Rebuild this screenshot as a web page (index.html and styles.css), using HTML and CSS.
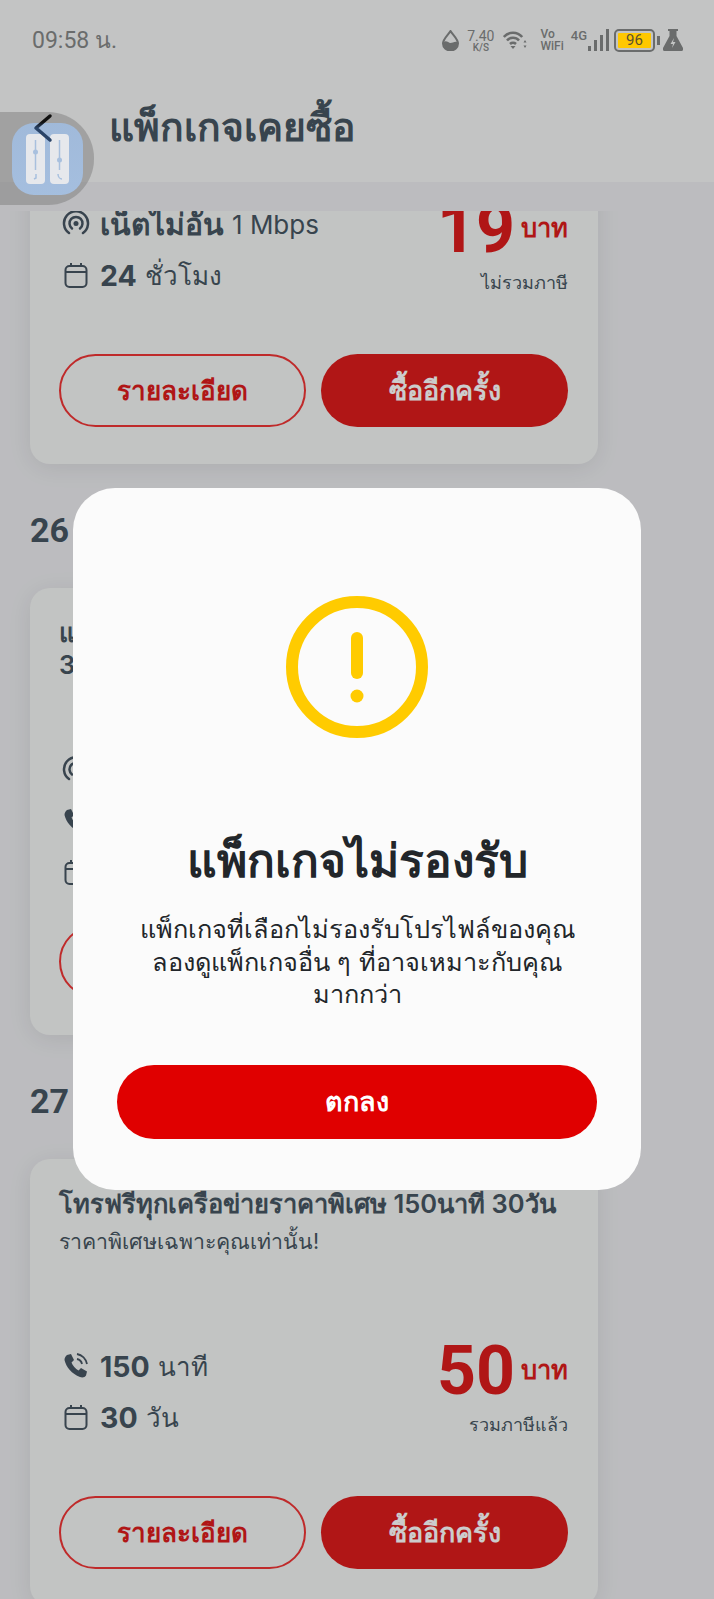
FILE: index.html
```html
<!DOCTYPE html>
<html>
<head>
    <title>แพ็กเกจเคยซื้อ</title>
    <meta charset="utf-8">
    <link rel="stylesheet" href="styles.css">
</head>
<body>
    <div class="status-bar">
        <span class="time">09:58 น.</span>
        <div class="status-icons">
            <svg class="ic-drop" width="17" height="21" viewBox="0 0 17 21"><path d="M8.5 1C6 5 1 9 1 13.5a7.5 7 0 0 0 15 0C16 9 11 5 8.5 1z" fill="none" stroke="#6a6c6c" stroke-width="2"/><path d="M1.5 12c3-2 5 1 7 1s4-2 7-1v2a7 6.500 0 0 1-14 0z" fill="#6a6c6c"/></svg>
            <div class="speed"><span>7.40</span><small>K/S</small></div>
            <svg class="ic-wifi" width="24" height="18" viewBox="0 0 24 18"><path d="M0.800 6a12 12 0 0 1 18.400 0M4 9.500a8 8 0 0 1 12 0M7 13a4.500 4.500 0 0 1 6 0" fill="none" stroke="#6a6c6c" stroke-width="2.600"/><path d="M7.500 15h5L10 18z" fill="#6a6c6c"/><path d="M22 9l1.500 2.500h-3zM22 17l1.500-2.500h-3z" fill="#6a6c6c"/></svg>
            <div class="vowifi"><span>Vo</span><span>WiFi</span></div>
            <span class="net">4G</span>
            <div class="signal"><i class="b1"></i><i class="b2"></i><i class="b3"></i><i class="b4"></i></div>
            <div class="battery"><div class="battery-fill">96</div></div>
            <div class="battery-tip"></div>
            <svg class="ic-flask" width="20" height="22" viewBox="0 0 20 22"><path d="M5 0h10v2h-1.500v5L20 19a2 2 0 0 1-2 3H2a2 2 0 0 1-2-3L6.500 7V2H5z" fill="#6a6c6c"/><path d="M11 9l-3.500 6h2.500l-1 4 3.500-6h-2.500z" fill="#c3c5c4"/></svg>
        </div>
    </div>

    <div class="header">
        <svg class="back" width="20" height="30" viewBox="0 0 20 30">
            <defs>
                <linearGradient id="back-grad" gradientUnits="userSpaceOnUse" x1="0" y1="3" x2="0" y2="27">
                    <stop offset="0.25" stop-color="#111"/>
                    <stop offset="0.5" stop-color="#2a4468"/>
                </linearGradient>
            </defs>
            <path d="M17 3L3 15l14 12" fill="none" stroke="url(#back-grad)" stroke-width="3.500" stroke-linecap="round" stroke-linejoin="round"/>
        </svg>
        <h1>แพ็กเกจเคยซื้อ</h1>
    </div>

    <div class="strip"></div>

    <div class="list-view">
        <div class="list">
            <div class="card">
                <div class="card-top"></div>
                <div class="card-mid">
                    <div class="rows">
                        <div class="row">
                            <svg class="row-ic" width="28" height="28" viewBox="0 0 28 28"><use href="#ic-net"/></svg>
                            <b class="row-big">เน็ตไม่อั้น</b> <span class="row-small">1 Mbps</span>
                        </div>
                        <div class="row">
                            <svg class="row-ic" width="28" height="28" viewBox="0 0 28 28"><use href="#ic-cal"/></svg>
                            <b>24</b> <span class="row-unit">ชั่วโมง</span>
                        </div>
                    </div>
                    <div class="price">
                        <div class="price-line"><span class="price-num">19</span><span class="price-unit">บาท</span></div>
                        <div class="price-note">ไม่รวมภาษี</div>
                    </div>
                </div>
                <div class="buttons">
                    <button class="btn-outline">รายละเอียด</button>
                    <button class="btn-solid">ซื้ออีกครั้ง</button>
                </div>
            </div>

            <h2>26</h2>
            <div class="card">
                <div class="card-top">
                    <div class="card-title">แ<br>3</div>
                </div>
                <div class="card-mid">
                    <div class="rows">
                        <div class="row"><svg class="row-ic" width="28" height="28" viewBox="0 0 28 28"><use href="#ic-net"/></svg></div>
                        <div class="row"><svg class="row-ic" width="28" height="28" viewBox="0 0 28 28"><use href="#ic-call"/></svg></div>
                        <div class="row"><svg class="row-ic" width="28" height="28" viewBox="0 0 28 28"><use href="#ic-cal"/></svg></div>
                    </div>
                </div>
                <div class="buttons">
                    <button class="btn-outline"></button>
                    <button class="btn-solid"></button>
                </div>
            </div>

            <h2>27</h2>
            <div class="card">
                <div class="card-top">
                    <div class="card-title">โทรฟรีทุกเครือข่ายราคาพิเศษ 150นาที 30วัน</div>
                    <div class="card-sub">ราคาพิเศษเฉพาะคุณเท่านั้น!</div>
                </div>
                <div class="card-mid">
                    <div class="rows">
                        <div class="row">
                            <svg class="row-ic" width="28" height="28" viewBox="0 0 28 28"><use href="#ic-call"/></svg>
                            <b>150</b> <span class="row-unit">นาที</span>
                        </div>
                        <div class="row">
                            <svg class="row-ic" width="28" height="28" viewBox="0 0 28 28"><use href="#ic-cal"/></svg>
                            <b>30</b> <span class="row-unit">วัน</span>
                        </div>
                    </div>
                    <div class="price">
                        <div class="price-line"><span class="price-num">50</span><span class="price-unit">บาท</span></div>
                        <div class="price-note">รวมภาษีแล้ว</div>
                    </div>
                </div>
                <div class="buttons">
                    <button class="btn-outline">รายละเอียด</button>
                    <button class="btn-solid">ซื้ออีกครั้ง</button>
                </div>
            </div>
        </div>
    </div>

    <div class="overlay">
        <div class="modal">
            <svg class="warn" width="142" height="142" viewBox="0 0 142 142">
                <circle cx="71" cy="71" r="65" fill="none" stroke="#ffcb00" stroke-width="12"/>
                <line x1="71" y1="42" x2="71" y2="77" stroke="#ffcb00" stroke-width="12" stroke-linecap="round"/>
                <circle cx="71" cy="100" r="6.500" fill="#ffcb00"/>
            </svg>
            <div class="modal-title">แพ็กเกจไม่รองรับ</div>
            <div class="modal-text">แพ็กเกจที่เลือกไม่รองรับโปรไฟล์ของคุณ<br>ลองดูแพ็กเกจอื่น ๆ ที่อาจเหมาะกับคุณ<br>มากกว่า</div>
            <button class="modal-btn">ตกลง</button>
        </div>
    </div>

    <div class="bubble">
        <div class="app-icon">
            <div class="app-panel">
                <svg width="19" height="50" viewBox="0 0 19 50"><path d="M9.500 6v30" stroke="#a8c0de" stroke-width="1.500"/><circle cx="9.500" cy="18" r="2.500" fill="#a8c0de"/><path d="M10 40v4l-2 1" fill="none" stroke="#a8c0de" stroke-width="1.500"/></svg>
            </div>
            <div class="app-panel">
                <svg width="19" height="50" viewBox="0 0 19 50"><path d="M9.500 6v30" stroke="#a8c0de" stroke-width="1.500"/><circle cx="9.500" cy="26" r="2.500" fill="#a8c0de"/><path d="M8 40c0 3 2 5 4 5" fill="none" stroke="#a8c0de" stroke-width="1.500"/></svg>
            </div>
        </div>
    </div>

    <svg class="defs" width="0" height="0">
        <symbol id="ic-net" viewBox="0 0 28 28">
            <path d="M7 23a12 12 0 1 1 14 0" fill="none" stroke="currentColor" stroke-width="2.500" stroke-linecap="round"/>
            <path d="M10 18.500a6.500 6.500 0 1 1 8 0" fill="none" stroke="currentColor" stroke-width="2.500" stroke-linecap="round"/>
            <circle cx="14" cy="13.500" r="2.500" fill="currentColor"/>
        </symbol>
        <symbol id="ic-call" viewBox="0 0 28 28">
            <path d="M5 3l4-1 3 6-2.500 2.500c1 3 4 6.500 7 8L19 16l6 3.500-1 4c-1 2-4 2.500-6 1.500C10 22 4 15 2.500 8 2.500 6 3.500 4 5 3z" fill="currentColor"/>
            <path d="M15 2c5 1 9 5 10 10M15 7c2.500.500 4.500 2.500 5 5" fill="none" stroke="currentColor" stroke-width="1.800"/>
        </symbol>
        <symbol id="ic-cal" viewBox="0 0 28 28">
            <rect x="3.500" y="5" width="21" height="21" rx="4" fill="none" stroke="currentColor" stroke-width="2"/>
            <path d="M3.500 11h21M9 2v4M19 2v4" fill="none" stroke="currentColor" stroke-width="2"/>
        </symbol>
    </svg>
</body>
</html>
```

FILE: styles.css
```css
html, body {
    margin: 0;
    padding: 0;
}
body {
    position: relative;
    width: 714px;
    height: 1599px;
    overflow: hidden;
    font-family: Inter, Roboto, "Noto Sans", sans-serif;
    background-color: #ebecef;
    color: #475562;
}
.defs {
    position: absolute;
}

/* status bar sits above the dim layer, so it keeps its own colours */
.status-bar {
    position: absolute;
    top: 0;
    left: 0;
    z-index: 2;
    display: flex;
    justify-content: space-between;
    align-items: center;
    box-sizing: border-box;
    width: 714px;
    height: 80px;
    padding: 0 31px 0 32px;
    color: #6a6c6c;
}
.time {
    font-family: Roboto, sans-serif;
    font-size: 23px;
}
.status-icons {
    display: flex;
    align-items: center;
    font-family: Roboto, sans-serif;
}
.speed {
    display: flex;
    flex-direction: column;
    align-items: center;
    margin-left: 8px;
    font-size: 14px;
    line-height: 14px;
}
.speed small {
    font-size: 10px;
    line-height: 9px;
    font-weight: 500;
}
.ic-wifi {
    margin-left: 9px;
}
.vowifi {
    display: flex;
    flex-direction: column;
    margin-left: 13px;
    font-size: 12px;
    line-height: 12px;
    font-weight: 500;
}
.net {
    margin-left: 7px;
    margin-bottom: 9px;
    font-size: 13px;
    font-weight: 500;
}
.signal {
    display: flex;
    align-items: flex-end;
    gap: 3px;
    height: 22px;
    margin-left: 1px;
}
.signal i {
    width: 3px;
    background-color: #6a6c6c;
}
.b1 { height: 5px; }
.b2 { height: 11px; }
.b3 { height: 16px; }
.b4 { height: 22px; }
.battery {
    box-sizing: border-box;
    width: 41px;
    height: 23px;
    margin-left: 5px;
    padding: 2px;
    border: 2px solid #6a6c6c;
    border-radius: 5px;
}
.battery-fill {
    height: 15px;
    border-radius: 1px;
    background-color: #ffc800;
    color: #5a5030;
    font-size: 15px;
    line-height: 15px;
    text-align: center;
}
.battery-tip {
    width: 3px;
    height: 9px;
    margin-left: 2px;
    background-color: #6a6c6c;
}
.ic-flask {
    margin-left: 3px;
}

/* header */
.header {
    display: flex;
    align-items: center;
    box-sizing: border-box;
    height: 182px;
    padding-top: 80px;
    background-color: #f4f6f5;
}
.back {
    position: relative;
    z-index: 3;
    margin-left: 33px;
    margin-bottom: 6px;
}
.header h1 {
    margin: 0 0 8px 56px;
    font-size: 39px;
    font-weight: 700;
    color: #475562;
}
.strip {
    height: 29px;
}

/* list */
.list-view {
    height: 1388px;
    overflow: hidden;
}
.list {
    margin-top: -194px;
    padding: 0 30px;
    width: 568px;
}
.list h2 {
    margin: 46px 0 38px;
    font-family: Roboto, sans-serif;
    font-size: 34px;
    line-height: 40px;
    font-weight: 700;
}
.card {
    display: flex;
    flex-direction: column;
    box-sizing: border-box;
    height: 447px;
    padding: 0 30px 37px 29px;
    border-radius: 20px;
    background-color: #f3f5f4;
    box-shadow: 0 4px 24px rgba(0, 0, 0, .08);
}
.card-top {
    height: 97px;
    padding-top: 29px;
}
.card-title {
    font-size: 25.500px;
    line-height: 32px;
    font-weight: 600;
    white-space: nowrap;
}
.card-sub {
    margin-top: 8px;
    font-size: 21.300px;
    line-height: 26px;
}
.card-mid {
    display: flex;
    justify-content: space-between;
    align-items: center;
    flex: 1;
}
.rows {
    padding-top: 2px;
}
.row {
    display: flex;
    align-items: center;
    gap: 8px;
    height: 51px;
    padding-left: 3px;
    font-size: 28.500px;
    white-space: nowrap;
}
.row b {
    font-weight: 700;
}
.row-ic {
    margin-right: 2px;
    color: #475562;
}
.row b.row-big {
    font-size: 30px;
}
.row-small {
    font-size: 26px;
}
.row-unit {
    font-size: 26px;
}
.price {
    padding-bottom: 10px;
    text-align: right;
}
.price-line {
    display: flex;
    justify-content: flex-end;
    align-items: center;
    gap: 6px;
    height: 72px;
    color: #dc1c1c;
}
.price-num {
    font-family: Roboto, sans-serif;
    font-size: 68px;
    font-weight: 700;
}
.price-unit {
    margin-top: -2px;
    font-size: 25.500px;
    font-weight: 700;
}
.price-note {
    margin-top: 6px;
    font-size: 18px;
    line-height: 24px;
}
.buttons {
    display: flex;
    justify-content: space-between;
}
.buttons button {
    box-sizing: border-box;
    width: 247px;
    height: 73px;
    border-radius: 37px;
    font-family: inherit;
    font-weight: 700;
}
.btn-outline {
    border: 2px solid #ef3535;
    background-color: transparent;
    color: #dc1c1c;
    font-size: 26px;
}
.btn-solid {
    border: none;
    background-color: #dc1c1c;
    color: #fff;
    font-size: 27px;
}

/* dialog */
.overlay {
    position: absolute;
    top: 0;
    left: 0;
    box-sizing: border-box;
    width: 714px;
    height: 1599px;
    padding: 488px 73px 0;
    background-color: rgba(0, 0, 0, .2);
}
.modal {
    display: flex;
    flex-direction: column;
    align-items: center;
    box-sizing: border-box;
    height: 702px;
    padding-top: 108px;
    border-radius: 42px;
    background-color: #fbfbfb;
    color: #22262a;
}
.modal-title {
    margin-top: 96px;
    font-size: 46px;
    line-height: 52px;
    font-weight: 600;
}
.modal-text {
    margin-top: 27px;
    font-size: 25.300px;
    line-height: 32.500px;
    text-align: center;
}
.modal-btn {
    width: 480px;
    height: 74px;
    margin-top: 54px;
    border: none;
    border-radius: 37px;
    background-color: #e00000;
    color: #fff;
    font-family: inherit;
    font-size: 27px;
    font-weight: 700;
}

/* floating app bubble */
.bubble {
    position: absolute;
    top: 112px;
    left: 0;
    display: flex;
    align-items: center;
    box-sizing: border-box;
    width: 94px;
    height: 93px;
    padding-left: 12px;
    border-radius: 0 46px 46px 0;
    background-color: rgba(110, 110, 110, .4);
}
.app-icon {
    display: flex;
    justify-content: center;
    align-items: center;
    gap: 5px;
    width: 71px;
    height: 72px;
    border-radius: 22px;
    background: linear-gradient(180deg, rgba(160, 190, 228, .85), rgba(165, 192, 226, .95));
}
.app-panel {
    width: 19px;
    height: 50px;
    border-radius: 4px;
    background-color: #e6e8ec;
}
.app-panel svg {
    display: block;
}
```
